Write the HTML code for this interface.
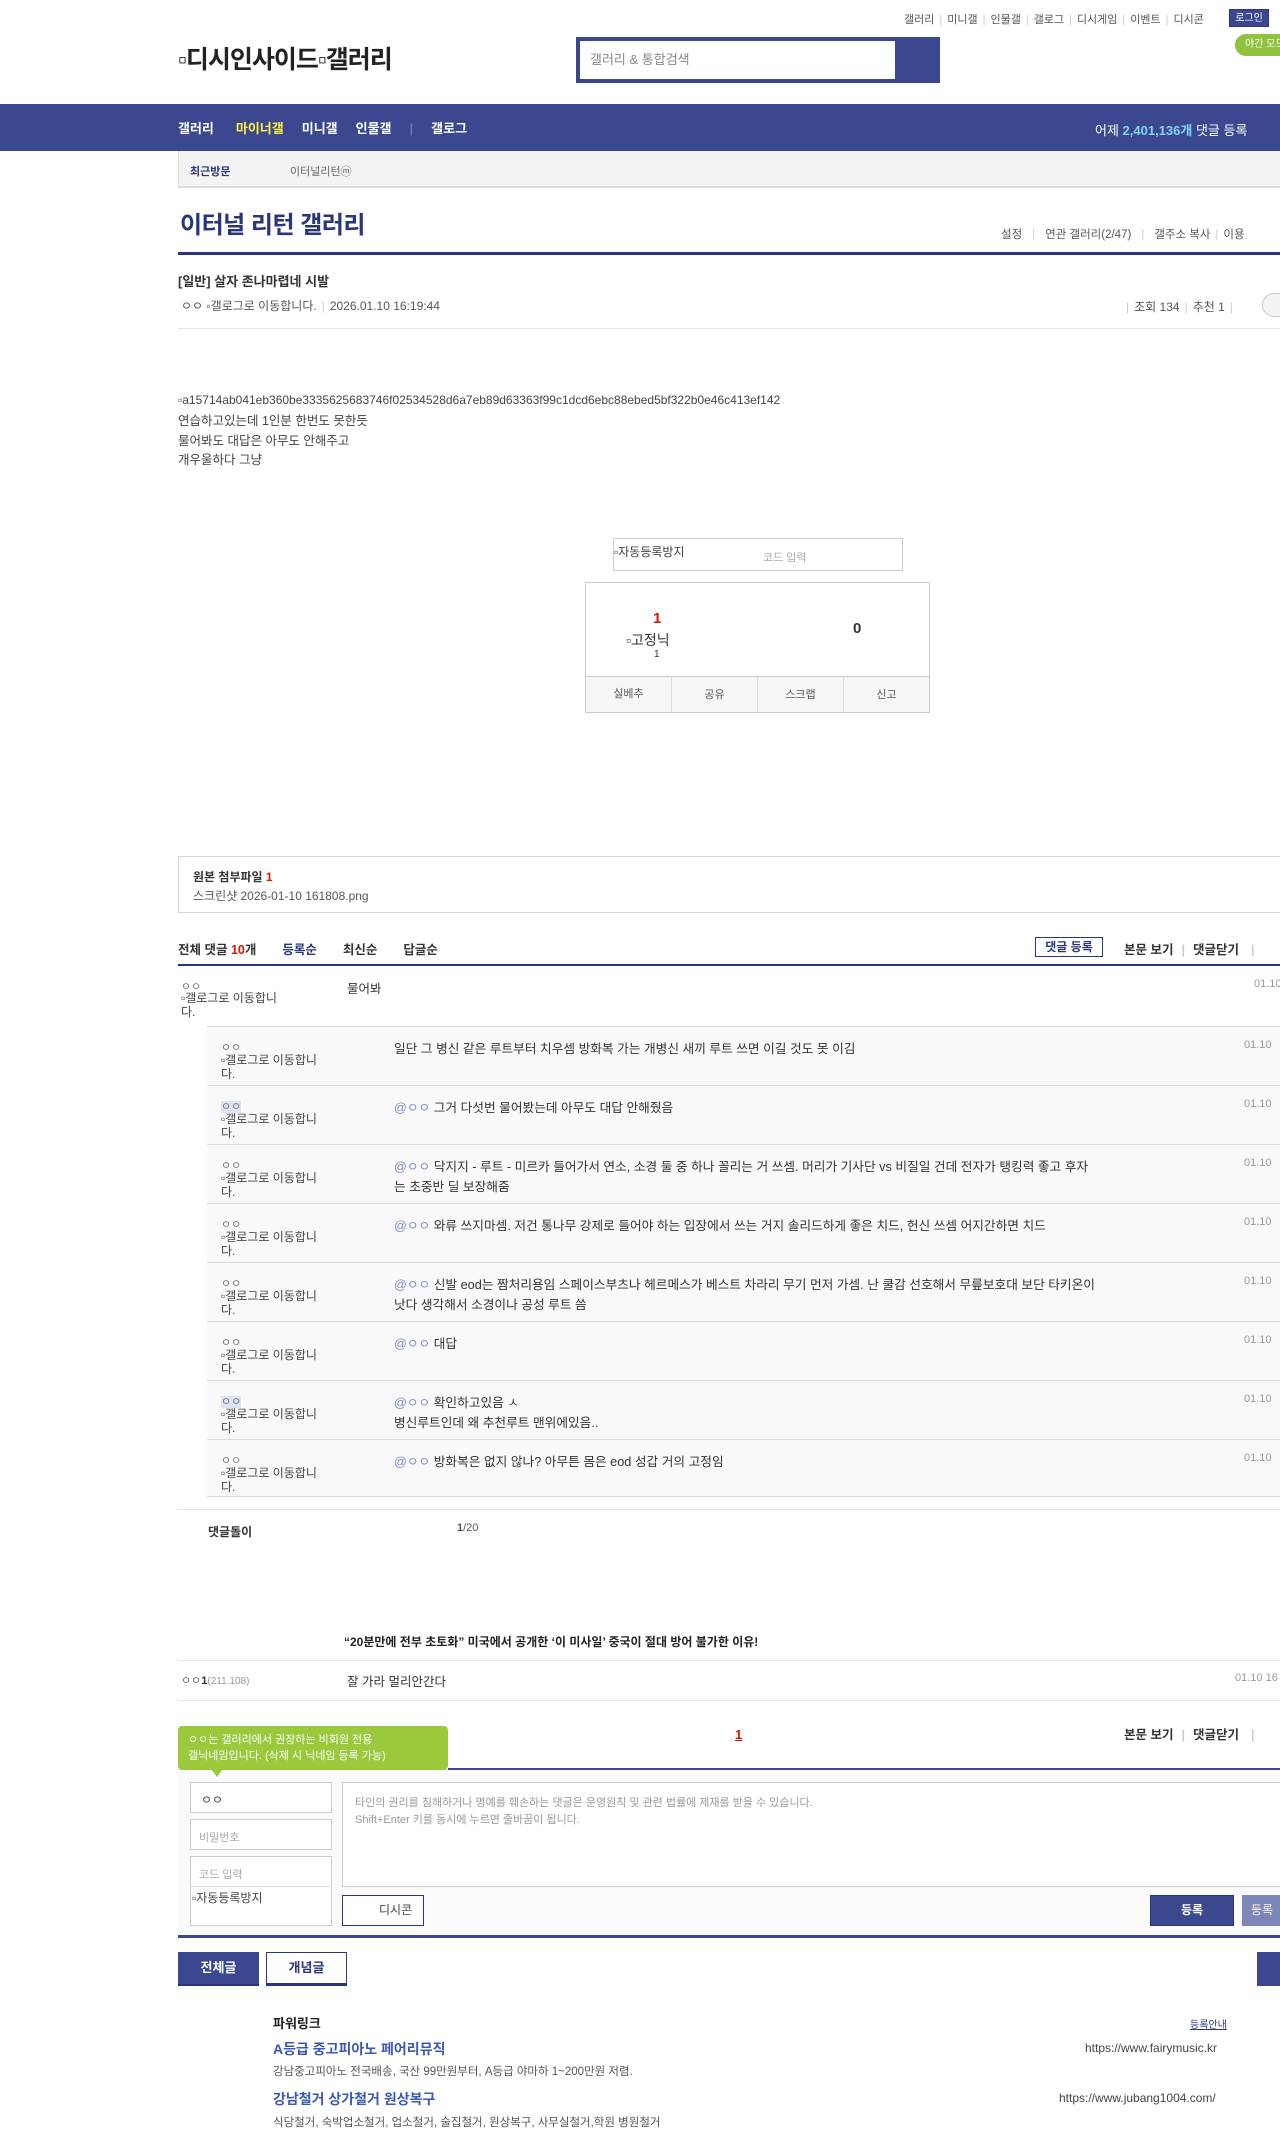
<!DOCTYPE html>
<html><head><meta charset="utf-8">
<style>
*{margin:0;padding:0;box-sizing:border-box}
body{width:1280px;height:2152px;overflow:hidden;position:relative;background:#fff;font-family:"Liberation Sans","Noto Sans CJK KR",sans-serif;font-size:12px;color:#333}
.a{position:absolute;white-space:nowrap}
.sep{color:#ccc;margin:0 5px}
.bx{position:absolute;border:1px solid #ccc;background:#fff}
.ri{position:absolute;left:207px;width:1100px;height:59px;background:#f9f9f9;border-top:1px solid #ddd}
.nm{position:absolute;left:14px;top:12px;font-size:11px;color:#777}
.ic{position:absolute;left:14px;top:26px;font-size:12px;color:#444;line-height:14px;width:100px;white-space:normal;word-break:break-all}
.tx{position:absolute;left:187px;top:12px;font-size:12.7px;color:#333;line-height:20px;white-space:normal;width:775px}
.dt{position:absolute;left:1037px;top:12px;font-size:11px;color:#999}
.at{color:#7f8dc8}
.hl{background:#dde3f5}
</style></head><body>
<div class="a" style="top:11px;left:904px;font-size:11px;color:#555">갤러리<span class="sep">|</span>미니갤<span class="sep">|</span>인물갤<span class="sep">|</span>갤로그<span class="sep">|</span>디시게임<span class="sep">|</span>이벤트<span class="sep">|</span>디시콘</div>
<div class="a" style="top:9px;left:1229px;width:40px;height:18px;background:#3b4890;color:#fff;font-size:10px;text-align:center;line-height:18px;border:1px solid #29367c">로그인</div>
<div class="a" style="top:34px;left:1235px;width:60px;height:22px;background:#8fc33d;border-radius:11px;color:#fff;font-size:10px;line-height:22px;padding-left:10px">야간 모드</div>
<div class="a" style="top:40px;left:178px;font-size:25px;color:#222;font-weight:bold;letter-spacing:-1px">▫디시인사이드▫갤러리</div>
<div class="a" style="top:37px;left:576px;width:364px;height:46px;background:#3b4890"></div>
<div class="a" style="top:41px;left:580px;width:315px;height:38px;background:#fff;font-size:13px;color:#888;line-height:38px;padding-left:10px">갤러리 &amp; 통합검색</div>
<div class="a" style="top:104px;left:0;width:1280px;height:47px;background:#3b4890"></div>
<div class="a" style="top:120px;left:178px;font-size:13px;font-weight:bold;color:#fff;line-height:18px">갤러리<span style="color:#ffed45;margin-left:22px">마이너갤</span><span style="margin-left:18px">미니갤</span><span style="margin-left:18px">인물갤</span><span style="color:#6a76b0;margin:0 18px">|</span>갤로그</div>
<div class="a" style="top:120px;left:1095px;font-size:13px;color:#fff">어제 <b style="color:#81d4fa">2,401,136개</b> 댓글 등록</div>
<div class="a" style="top:151px;left:178px;width:1110px;height:37px;background:#f3f3f3;border-bottom:2px solid #ddd;border-left:1px solid #ddd"></div>
<div class="a" style="top:163px;left:190px;font-size:11px;font-weight:bold;color:#29367c">최근방문</div>
<div class="a" style="top:163px;left:290px;font-size:11px;color:#666">이터널리턴ⓜ</div>
<div class="a" style="top:205px;left:180px;font-size:24px;font-weight:bold;color:#29367c;letter-spacing:-0.5px">이터널 리턴 갤러리</div>
<div class="a" style="top:226px;left:1001px;font-size:11.5px;color:#555">설정<span class="sep" style="margin:0 10px">|</span>연관 갤러리(2/47)<span class="sep" style="margin:0 10px">|</span>갤주소 복사<span class="sep">|</span>이용</div>
<div class="a" style="top:252px;left:178px;width:1110px;height:3px;background:#29367c"></div>
<div class="a" style="top:271px;left:178px;font-size:13px;font-weight:bold;color:#333">[일반] 살자 존나마렵네 시발</div>
<div class="a" style="top:297px;left:181px;font-size:12px;color:#555">ㅇㅇ ▫갤로그로 이동합니다.<span class="sep">|</span>2026.01.10 16:19:44</div>
<div class="a" style="top:298px;left:1121px;font-size:12px;color:#555"><span class="sep">|</span>조회 134<span class="sep">|</span>추천 1<span class="sep">|</span></div>
<div class="a" style="top:293px;left:1262px;width:30px;height:24px;border:1px solid #ccc;border-radius:12px;background:#f3f3f3"></div>
<div class="a" style="top:328px;left:178px;width:1110px;height:1px;background:#e5e5e5"></div>
<div class="a" style="top:393px;left:178px;font-size:12px;color:#444">▫a15714ab041eb360be3335625683746f02534528d6a7eb89d63363f99c1dcd6ebc88ebed5bf322b0e46c413ef142</div>
<div class="a" style="top:412px;left:178px;font-size:12.5px;color:#444;line-height:19.5px;white-space:normal">연습하고있는데 1인분 한번도 못한듯<br>물어봐도 대답은 아무도 안해주고<br>개우울하다 그냥</div>
<div class="bx" style="top:538px;left:613px;width:290px;height:33px"></div>
<div class="a" style="top:543px;left:614px;font-size:12px;color:#444">▫자동등록방지</div>
<div class="a" style="top:549px;left:763px;font-size:11px;color:#aaa">코드 입력</div>
<div class="bx" style="top:582px;left:585px;width:345px;height:131px"></div>
<div class="a" style="top:610px;left:653px;font-size:15px;font-weight:bold;color:#d31900">1</div>
<div class="a" style="top:630px;left:626px;font-size:14px;color:#333">▫고정닉</div>
<div class="a" style="top:649px;left:654px;font-size:10px;color:#333">1</div>
<div class="a" style="top:620px;left:853px;font-size:15px;font-weight:bold;color:#333">0</div>
<div class="a" style="top:676px;left:586px;width:343px;height:36px;background:#f6f6f6;border-top:1px solid #ccc;display:flex;font-size:11px;color:#555">
<div style="flex:1;border-right:1px solid #ddd;text-align:center;line-height:34px">실베추</div><div style="flex:1;border-right:1px solid #ddd;text-align:center;line-height:36px">공유</div><div style="flex:1;border-right:1px solid #ddd;text-align:center;line-height:36px">스크랩</div><div style="flex:1;text-align:center;line-height:36px">신고</div></div>
<div class="bx" style="top:856px;left:178px;width:1110px;height:57px;border-color:#d5d5d5"></div>
<div class="a" style="top:868px;left:193px;font-size:12px;font-weight:bold;color:#333">원본 첨부파일 <span style="color:#d31900">1</span></div>
<div class="a" style="top:887px;left:193px;font-size:12px;color:#555">스크린샷 2026-01-10 161808.png</div>
<div class="a" style="top:939px;left:178px;font-size:12.5px;font-weight:bold;color:#333">전체 댓글 <span style="color:#d31900">10</span>개<span style="color:#29367c;margin-left:26px">등록순</span><span style="margin-left:26px">최신순</span><span style="margin-left:26px">답글순</span></div>
<div class="a" style="top:937px;left:1035px;width:68px;height:20px;border:1px solid #29367c;font-size:12px;font-weight:bold;color:#29367c;text-align:center;line-height:18px">댓글 등록</div>
<div class="a" style="top:939px;left:1124px;font-size:12.5px;font-weight:bold;color:#333">본문 보기<span class="sep" style="margin:0 8px">|</span>댓글닫기<span class="sep" style="margin:0 12px">|</span></div>
<div class="a" style="top:964px;left:178px;width:1110px;height:2px;background:#29367c"></div>
<div class="a" style="top:978px;left:181px;font-size:11px;color:#777">ㅇㅇ</div>
<div class="a" style="top:991px;left:181px;font-size:12px;color:#444;line-height:14px;width:100px;white-space:normal;word-break:break-all">▫갤로그로 이동합니다.</div>
<div class="a" style="top:978px;left:347px;font-size:12.5px;color:#333">물어봐</div>
<div class="a" style="top:978px;left:1254px;font-size:11px;color:#999">01.10</div>
<div class="ri" style="top:1026px"><div class="nm">ㅇㅇ</div><div class="ic">▫갤로그로 이동합니다.</div><div class="tx">일단 그 병신 같은 루트부터 치우셈 방화복 가는 개병신 새끼 루트 쓰면 이길 것도 못 이김</div><div class="dt">01.10</div></div>
<div class="ri" style="top:1085px"><div class="nm"><span class="hl">ㅇㅇ</span></div><div class="ic">▫갤로그로 이동합니다.</div><div class="tx"><span class="at">@ㅇㅇ</span> 그거 다섯번 물어봤는데 아무도 대답 안해줬음</div><div class="dt">01.10</div></div>
<div class="ri" style="top:1144px"><div class="nm">ㅇㅇ</div><div class="ic">▫갤로그로 이동합니다.</div><div class="tx"><span class="at">@ㅇㅇ</span> 닥지지 - 루트 - 미르카 들어가서 연소, 소경 둘 중 하나 꼴리는 거 쓰셈. 머리가 기사단 vs 비질일 건데 전자가 탱킹력 좋고 후자<br>는 초중반 딜 보장해줌</div><div class="dt">01.10</div></div>
<div class="ri" style="top:1203px"><div class="nm">ㅇㅇ</div><div class="ic">▫갤로그로 이동합니다.</div><div class="tx"><span class="at">@ㅇㅇ</span> 와류 쓰지마셈. 저건 통나무 강제로 들어야 하는 입장에서 쓰는 거지 솔리드하게 좋은 치드, 헌신 쓰셈 어지간하면 치드</div><div class="dt">01.10</div></div>
<div class="ri" style="top:1262px"><div class="nm">ㅇㅇ</div><div class="ic">▫갤로그로 이동합니다.</div><div class="tx"><span class="at">@ㅇㅇ</span> 신발 eod는 짬처리용임 스페이스부츠나 헤르메스가 베스트 차라리 무기 먼저 가셈. 난 쿨감 선호해서 무릎보호대 보단 타키온이<br>낫다 생각해서 소경이나 공성 루트 씀</div><div class="dt">01.10</div></div>
<div class="ri" style="top:1321px"><div class="nm">ㅇㅇ</div><div class="ic">▫갤로그로 이동합니다.</div><div class="tx"><span class="at">@ㅇㅇ</span> 대답</div><div class="dt">01.10</div></div>
<div class="ri" style="top:1380px"><div class="nm"><span class="hl">ㅇㅇ</span></div><div class="ic">▫갤로그로 이동합니다.</div><div class="tx"><span class="at">@ㅇㅇ</span> 확인하고있음 ㅅ<br>병신루트인데 왜 추천루트 맨위에있음..</div><div class="dt">01.10</div></div>
<div class="ri" style="top:1439px;height:58px;border-bottom:1px solid #ddd"><div class="nm">ㅇㅇ</div><div class="ic">▫갤로그로 이동합니다.</div><div class="tx"><span class="at">@ㅇㅇ</span> 방화복은 없지 않나? 아무튼 몸은 eod 성갑 거의 고정임</div><div class="dt">01.10</div></div>
<div class="a" style="top:1509px;left:178px;width:1110px;height:1px;background:#e5e5e5"></div>
<div class="a" style="top:1523px;left:208px;font-size:12px;font-weight:bold;color:#333">댓글돌이</div>
<div class="a" style="top:1522px;left:457px;font-size:11px;color:#555"><b>1</b>/20</div>
<div class="a" style="top:1633px;left:344px;font-size:12px;font-weight:bold;color:#222">“20분만에 전부 초토화” 미국에서 공개한 ‘이 미사일’ 중국이 절대 방어 불가한 이유!</div>
<div class="a" style="top:1660px;left:178px;width:1110px;height:1px;background:#e5e5e5"></div>
<div class="a" style="top:1672px;left:181px;font-size:11px;color:#666">ㅇㅇ<b style="color:#333">1</b><span style="color:#999;font-size:10px">(211.108)</span></div>
<div class="a" style="top:1671px;left:347px;font-size:12.5px;color:#333">잘 가라 멀리안간다</div>
<div class="a" style="top:1672px;left:1235px;font-size:11px;color:#999">01.10 16</div>
<div class="a" style="top:1700px;left:178px;width:1110px;height:1px;background:#e5e5e5"></div>
<div class="a" style="top:1726px;left:178px;width:270px;height:44px;background:#9ac93b;border-radius:4px;color:#fff;font-size:11px;line-height:16px;padding:6px 10px;white-space:normal">ㅇㅇ는 갤러리에서 권장하는 비회원 전용<br>갤닉네임입니다. (삭제 시 닉네임 등록 가능)</div>
<div class="a" style="top:1770px;left:212px;width:0;height:0;border-left:5px solid transparent;border-right:5px solid transparent;border-top:7px solid #9ac93b;z-index:2"></div>
<div class="a" style="top:1727px;left:735px;font-size:13px;font-weight:bold;color:#d31900;text-decoration:underline">1</div>
<div class="a" style="top:1724px;left:1124px;font-size:12.5px;font-weight:bold;color:#333">본문 보기<span class="sep" style="margin:0 8px">|</span>댓글닫기<span class="sep" style="margin:0 12px">|</span></div>
<div class="a" style="top:1768px;left:448px;width:840px;height:2px;background:#3b4890"></div>
<div class="a" style="top:1770px;left:178px;width:1110px;height:166px;background:#fafafa"></div>
<div class="bx" style="top:1782px;left:190px;width:142px;height:31px;font-size:12px;color:#444;padding:8px 10px">ㅇㅇ</div>
<div class="bx" style="top:1819px;left:190px;width:142px;height:31px;font-size:11px;color:#aaa;padding:9px 8px">비밀번호</div>
<div class="bx" style="top:1856px;left:190px;width:142px;height:70px;font-size:11px;color:#aaa;padding:9px 8px">코드 입력</div>
<div class="a" style="top:1886px;left:190px;width:142px;height:1px;background:#ddd"></div>
<div class="a" style="top:1889px;left:192px;font-size:12px;color:#444">▫자동등록방지</div>
<div class="bx" style="top:1782px;left:342px;width:960px;height:105px;font-size:11px;color:#999;padding:12px 12px;line-height:17px;white-space:normal">타인의 권리를 침해하거나 명예를 훼손하는 댓글은 운영원칙 및 관련 법률에 제재를 받을 수 있습니다.<br>Shift+Enter 키를 동시에 누르면 줄바꿈이 됩니다.</div>
<div class="a" style="top:1895px;left:342px;width:82px;height:31px;border:1px solid #29367c;background:#fff;font-size:12px;color:#444;line-height:29px;padding-left:36px">디시콘</div>
<div class="a" style="top:1895px;left:1150px;width:84px;height:31px;background:#3b4890;border:1px solid #29367c;color:#fff;font-size:12px;font-weight:bold;text-align:center;line-height:29px">등록</div>
<div class="a" style="top:1895px;left:1242px;width:60px;height:31px;background:#7d86b8;color:#fff;font-size:12px;text-align:center;line-height:31px;padding-right:20px">등록</div>
<div class="a" style="top:1935px;left:178px;width:1110px;height:3px;background:#3b4890"></div>
<div class="a" style="top:1952px;left:178px;width:81px;height:34px;background:#3b4890;border-bottom:2px solid #29367c;color:#fff;font-size:13px;font-weight:bold;text-align:center;line-height:32px">전체글</div>
<div class="a" style="top:1952px;left:266px;width:81px;height:34px;background:#fff;border:1px solid #29367c;border-bottom:3px solid #29367c;color:#29367c;font-size:13px;font-weight:bold;text-align:center;line-height:30px">개념글</div>
<div class="a" style="top:1952px;left:1257px;width:40px;height:34px;background:#3b4890"></div>
<div class="a" style="top:2013px;left:273px;font-size:13px;font-weight:bold;color:#222">파워링크</div>
<div class="a" style="top:2016px;left:1190px;font-size:10px;color:#29367c;text-decoration:underline">등록안내</div>
<div class="a" style="top:2039px;left:273px;font-size:14px;font-weight:bold;color:#3b58b8">A등급 중고피아노 페어리뮤직</div>
<div class="a" style="top:2041px;left:1085px;font-size:12px;color:#444">https://www.fairymusic.kr</div>
<div class="a" style="top:2063px;left:273px;font-size:11.5px;color:#555">강남중고피아노 전국배송, 국산 99만원부터, A등급 야마하 1~200만원 저렴.</div>
<div class="a" style="top:2089px;left:273px;font-size:14px;font-weight:bold;color:#3b58b8">강남철거 상가철거 원상복구</div>
<div class="a" style="top:2091px;left:1059px;font-size:12px;color:#444">https://www.jubang1004.com/</div>
<div class="a" style="top:2114px;left:273px;font-size:11.5px;color:#555">식당철거, 숙박업소철거, 업소철거, 술집철거, 원상복구, 사무실철거,학원 병원철거</div>
</body></html>
